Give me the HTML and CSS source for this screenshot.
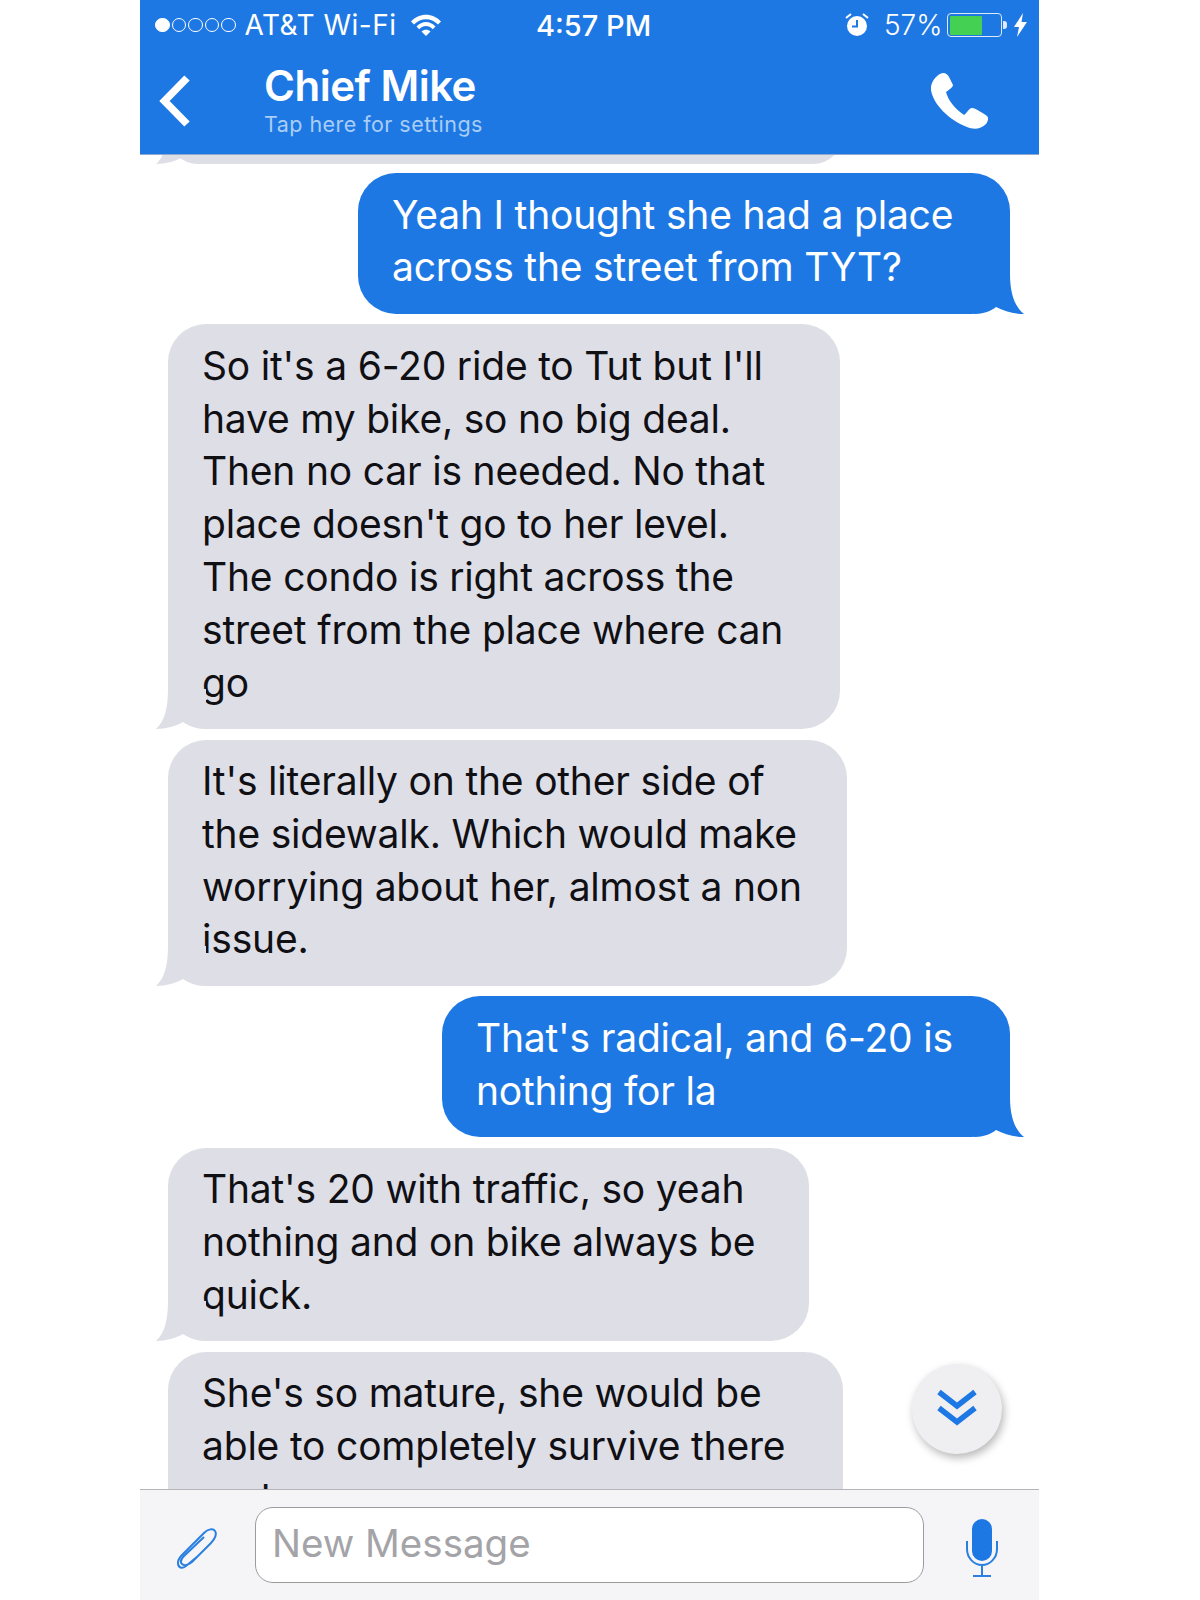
FILE: index.html
```html
<!DOCTYPE html>
<html lang="en">
<head>
<meta charset="utf-8">
<title>Chief Mike</title>
<link rel="stylesheet" href="styles.css">
</head>
<body>
<div class="phone">
  <header class="top">
    <div class="status">
      <div class="dots"><i class="dot on"></i><i class="dot"></i><i class="dot"></i><i class="dot"></i><i class="dot"></i></div>
      <span class="carrier">AT&amp;T Wi-Fi</span>
      <svg class="wifi" viewBox="0 0 30 22"><path d="M0 7.500 C8 -1.500 22 -1.500 30 7.500 L27 10.500 C20 3.500 10 3.500 3 10.500Z" fill="#fff"/><path d="M5.500 12.500 C11 6.500 19 6.500 24.500 12.500 L21.800 15.300 C17.500 11 12.500 11 8.200 15.300Z" fill="#fff"/><path d="M10.500 17.500 C13 15 17 15 19.500 17.500 L15 22Z" fill="#fff"/></svg>
      <span class="time">4:57 PM</span>
      <svg class="alarm" viewBox="0 0 24 24"><circle cx="12" cy="13" r="10" fill="#fff"/><path d="M12 7 V13.500 H7" fill="none" stroke="#1e78e3" stroke-width="2"/><path d="M1 5 L6 1 M23 5 L18 1" stroke="#fff" stroke-width="2"/></svg>
      <span class="pct">57%</span>
      <div class="battery"><div class="level"></div></div>
      <i class="nub"></i>
      <svg class="bolt" viewBox="0 0 13 24"><path d="M9 0 L0 14 H5 L3 24 L13 9 H7.500Z" fill="#fff"/></svg>
    </div>
    <div class="nav">
      <svg class="back" viewBox="0 0 32 52"><path d="M28 3 L5.500 26 L28 49" fill="none" stroke="#fff" stroke-width="7.500"/></svg>
      <div class="title">
        <div class="name">Chief Mike</div>
        <div class="sub">Tap here for settings</div>
      </div>
      <svg class="call" viewBox="0 0 58 57"><path d="M12 1 C15 1 17 3 18 5 L22 13 C22 15 19 17 15 20 C17 28 24 37 33 43 C36 41 38 36 41 36 C44 36 52 41 56 44 C58 46 57 49 55 52 C50 57 43 58 36 55 C18 48 2 32 0 18 C-1 10 6 2 12 1Z" fill="#fff"/></svg>
    </div>
  </header>

  <main class="messages">
    <div class="bubble in cut">
      <svg class="tail tail-in" viewBox="0 0 50 40"><path d="M12 0 C12 20 8 33 0 40 C10 40 20 37 27 33 C33 37 40 40 50 40 L50 0Z"/></svg>
    </div>
    <div class="bubble out w1">Yeah I thought she had a place<br>across the street from TYT?
      <svg class="tail tail-out" viewBox="0 0 50 40"><path d="M14 0 C14 20 9 33 0 40 C10 40 20 37 28 33 C33 37 40 40 50 40 L50 0Z"/></svg>
    </div>
    <div class="bubble in w2">So it's a 6-20 ride to Tut but I'll<br>have my bike, so no big deal.<br>Then no car is needed. No that<br>place doesn't go to her level.<br>The condo is right across the<br>street from the place where can<br>go
      <svg class="tail tail-in" viewBox="0 0 50 40"><path d="M12 0 C12 20 8 33 0 40 C10 40 20 37 27 33 C33 37 40 40 50 40 L50 0Z"/></svg>
    </div>
    <div class="bubble in w3">It's literally on the other side of<br>the sidewalk. Which would make<br>worrying about her, almost a non<br>issue.
      <svg class="tail tail-in" viewBox="0 0 50 40"><path d="M12 0 C12 20 8 33 0 40 C10 40 20 37 27 33 C33 37 40 40 50 40 L50 0Z"/></svg>
    </div>
    <div class="bubble out w4">That's radical, and 6-20 is<br>nothing for la
      <svg class="tail tail-out" viewBox="0 0 50 40"><path d="M14 0 C14 20 9 33 0 40 C10 40 20 37 28 33 C33 37 40 40 50 40 L50 0Z"/></svg>
    </div>
    <div class="bubble in w5">That's 20 with traffic, so yeah<br>nothing and on bike always be<br>quick.
      <svg class="tail tail-in" viewBox="0 0 50 40"><path d="M12 0 C12 20 8 33 0 40 C10 40 20 37 27 33 C33 37 40 40 50 40 L50 0Z"/></svg>
    </div>
    <div class="bubble in w6">She's so mature, she would be<br>able to completely survive there<br>and</div>
    <div class="scroll-down">
      <svg viewBox="0 0 42 42"><path d="M3 4 L21 18 L39 4 M3 20 L21 34 L39 20" fill="none" stroke="#1e78e3" stroke-width="5.500"/></svg>
    </div>
  </main>

  <footer class="composer">
    <svg class="clip" viewBox="0 0 40 42"><path d="M21 28 L9 38 C5 41 1 40 1 35 C1 32 3 29 5 27 L27 5 C31 1 36 0 38 3 C40 6 38 11 34 15 L15 34 C11 37 7 38 5 36 C3 34 4 31 7 28 L27 9" fill="none" stroke="#2a7fe0" stroke-width="2"/></svg>
    <div class="input">New Message</div>
    <svg class="mic" viewBox="0 0 32 58"><rect x="6" y="0" width="20" height="42" rx="10" fill="#1e78e3"/><path d="M1 22 V30 C1 39 8 46 16 46 C24 46 31 39 31 30 V22 M16 46 V57 M7 57 H25" fill="none" stroke="#2a7fe0" stroke-width="2"/></svg>
  </footer>
</div>
</body>
</html>
```
FILE: styles.css
```css
* { box-sizing: border-box; }
html, body { margin: 0; height: 1600px; overflow: hidden; background: #fff; }
body { font-family: Inter, "Liberation Sans", sans-serif; }

.phone {
  width: 899px;
  height: 1600px;
  margin-left: 140px;
  display: flex;
  flex-direction: column;
}

.top {
  height: 155px;
  flex: none;
  background: #1e78e3;
  border-bottom: 1px solid #8fa9cc;
  color: #fff;
  position: relative;
  z-index: 2;
}

.status {
  height: 50px;
  display: flex;
  align-items: center;
  padding-left: 15px;
  font-size: 28px;
}
.dots { display: flex; gap: 2px; }
.dot { width: 14.500px; height: 14.500px; border-radius: 50%; border: 1.500px solid #fff; }
.dot.on { background: #fff; }
.carrier { margin-left: 9px; width: 166.500px; letter-spacing: .5px; font-weight: 400; white-space: nowrap; }
.wifi { width: 30px; height: 22px; margin-right: 95px; }
.time { font-size: 29px; font-weight: 500; width: 309px; }
.alarm { width: 24px; height: 24px; }
.pct { margin-left: 15px; width: 63px; font-weight: 300; }
.battery {
  width: 55px;
  height: 24px;
  border: 1.500px solid #dfeaf8;
  border-radius: 4px;
  padding: 1.500px;
}
.level { width: 32px; height: 100%; background: #44d052; border-radius: 1px; }
.nub { width: 4px; height: 8px; margin-left: 1px; background: #dfeaf8; border-radius: 0 3px 3px 0; }
.bolt { width: 13px; height: 24px; margin-left: 7px; }

.nav { display: flex; align-items: flex-start; height: 104px; position: relative; }
.back { width: 32px; height: 52px; margin: 25px 0 0 19px; flex: none; }
.title { margin-left: 73px; margin-top: 13px; }
.name { font-size: 42px; line-height: 46px; font-weight: 600; letter-spacing: -.5px; }
.sub { font-size: 21.500px; line-height: 28px; margin-top: 1px; color: #a9cdf6; letter-spacing: .45px; }
.call { width: 58px; height: 57px; margin-left: auto; margin-right: 50px; margin-top: 22px; flex: none; }

.messages {
  flex: 1;
  min-height: 0;
  overflow: hidden;
  position: relative;
  display: flex;
  flex-direction: column;
  gap: 10.700px;
  padding: 0 29px 0 28px;
}

.bubble {
  position: relative;
  flex: none;
  padding: 15.500px 34px 19.500px;
  font-size: 39px;
  letter-spacing: -.2px;
  line-height: 52.800px;
  border-radius: 38px;
  white-space: nowrap;
}
.in { background: #dedee6; color: #101014; align-self: flex-start; }
.out { background: #1e78e3; color: #fff; align-self: flex-end; }
.cut {
  width: 675px;
  height: 60px;
  padding: 0;
  margin-top: -51px;
  margin-bottom: -1.700px;
}
.w1 { width: 652px; }
.w2 { width: 672px; }
.w3 { width: 679px; }
.w4 { width: 568px; }
.w5 { width: 641px; }
.w6 { width: 675px; }

.tail { position: absolute; bottom: 0; width: 50px; height: 40px; display: block; }
.tail-in { left: -12px; fill: #dedee6; }
.tail-out { right: -14px; transform: scaleX(-1); fill: #1e78e3; }

.scroll-down {
  position: absolute;
  right: 37px;
  top: 1209px;
  width: 90px;
  height: 90px;
  border-radius: 50%;
  background: #efeff1;
  box-shadow: 2px 4px 8px rgba(0, 0, 0, .28);
  display: flex;
  align-items: center;
  justify-content: center;
}
.scroll-down svg { width: 42px; height: 42px; display: block; }

.composer {
  height: 111px;
  flex: none;
  background: #f5f5f7;
  border-top: 1px solid #b4b4b9;
  display: flex;
  align-items: flex-start;
  position: relative;
}
.clip { width: 40px; height: 42px; margin: 38px 0 0 37px; flex: none; }
.input {
  width: 669px;
  height: 76px;
  margin: 17px 0 0 38px;
  padding-left: 16px;
  flex: none;
  background: #fff;
  border: 1px solid #9c9c9f;
  border-radius: 18px;
  color: #a3a3a8;
  font-size: 38.500px;
  line-height: 70px;
}
.mic { width: 32px; height: 58px; margin: 29px 0 0 42px; flex: none; }
```
